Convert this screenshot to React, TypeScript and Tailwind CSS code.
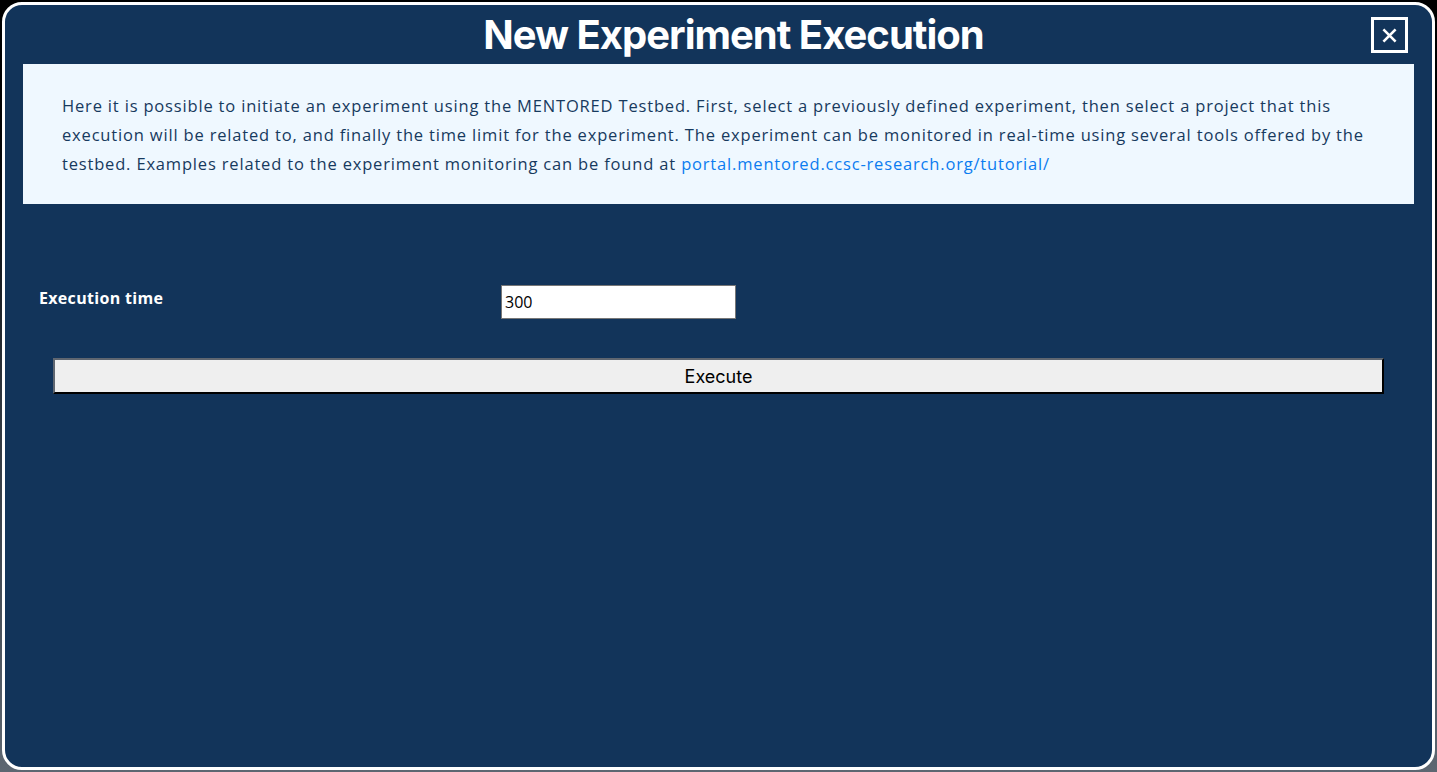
import React from "react";

const body = '"Open Sans", "Noto Sans", sans-serif';

function CloseIcon() {
  return (
    <svg viewBox="0 0 16 16" className="h-[15px] w-[15px]" fill="none" stroke="white" strokeWidth={2.8} strokeLinecap="square">
      <path d="M2.5 2.5 L13.5 13.5 M13.5 2.5 L2.5 13.5" />
    </svg>
  );
}

export default function App() {
  return (
    <div className="h-[772px] w-full bg-gradient-to-b from-black via-[#2b323a] to-[#5d6772] p-[2px]">
      <div className="flex h-full w-full flex-col rounded-[20px] border-[3px] border-white bg-[#12345a]">
        {/* Header */}
        <header className="relative flex h-[59px] items-center justify-center pl-[30px]">
          <h1
            className="text-[40px] font-bold leading-none tracking-[-0.025em] text-white"
            style={{ fontFamily: '"Inter", "Noto Sans", sans-serif' }}
          >
            New Experiment Execution
          </h1>
          <button
            type="button"
            className="absolute right-[24px] top-[12px] grid h-[36px] w-[37px] place-items-center border-[3px] border-white"
          >
            <CloseIcon />
          </button>
        </header>

        {/* Intro panel */}
        <div className="mx-[18px] h-[140px] bg-[#eff8ff] pl-[39px] pr-[30px] pt-[27px]">
          <p
            className="whitespace-nowrap text-[16.5px] leading-[29px] tracking-[0.05em] text-[#173a5e]"
            style={{ fontFamily: body }}
          >
            Here it is possible to initiate an experiment using the MENTORED Testbed. First, select a previously defined experiment, then select a project that this
            <br />
            execution will be related to, and finally the time limit for the experiment. The experiment can be monitored in real-time using several tools offered by the
            <br />
            testbed. Examples related to the experiment monitoring can be found at{" "}
            <a href="#" className="text-[#0b7cf0]">
              portal.mentored.ccsc-research.org/tutorial/
            </a>
          </p>
        </div>

        {/* Form */}
        <div className="mt-[81px] flex items-center">
          <label
            className="mb-[8px] ml-[34px] w-[462px] text-[16px] font-bold tracking-[0.02em] text-white"
            style={{ fontFamily: body }}
          >
            Execution time
          </label>
          <input
            defaultValue="300"
            className="h-[34px] w-[235px] border border-[#767676] bg-white px-[3px] text-[16px] text-black outline-none"
            style={{ fontFamily: body }}
          />
        </div>

        <div className="mt-[39px] px-[48px]">
          <button
            type="button"
            className="h-[36px] w-full border-2 border-b-black border-l-[#5f6670] border-r-black border-t-[#5f6670] bg-[#efefef] text-[18px] text-black"
            style={{ fontFamily: '"Inter", "Noto Sans", sans-serif' }}
          >
            Execute
          </button>
        </div>
      </div>
    </div>
  );
}
